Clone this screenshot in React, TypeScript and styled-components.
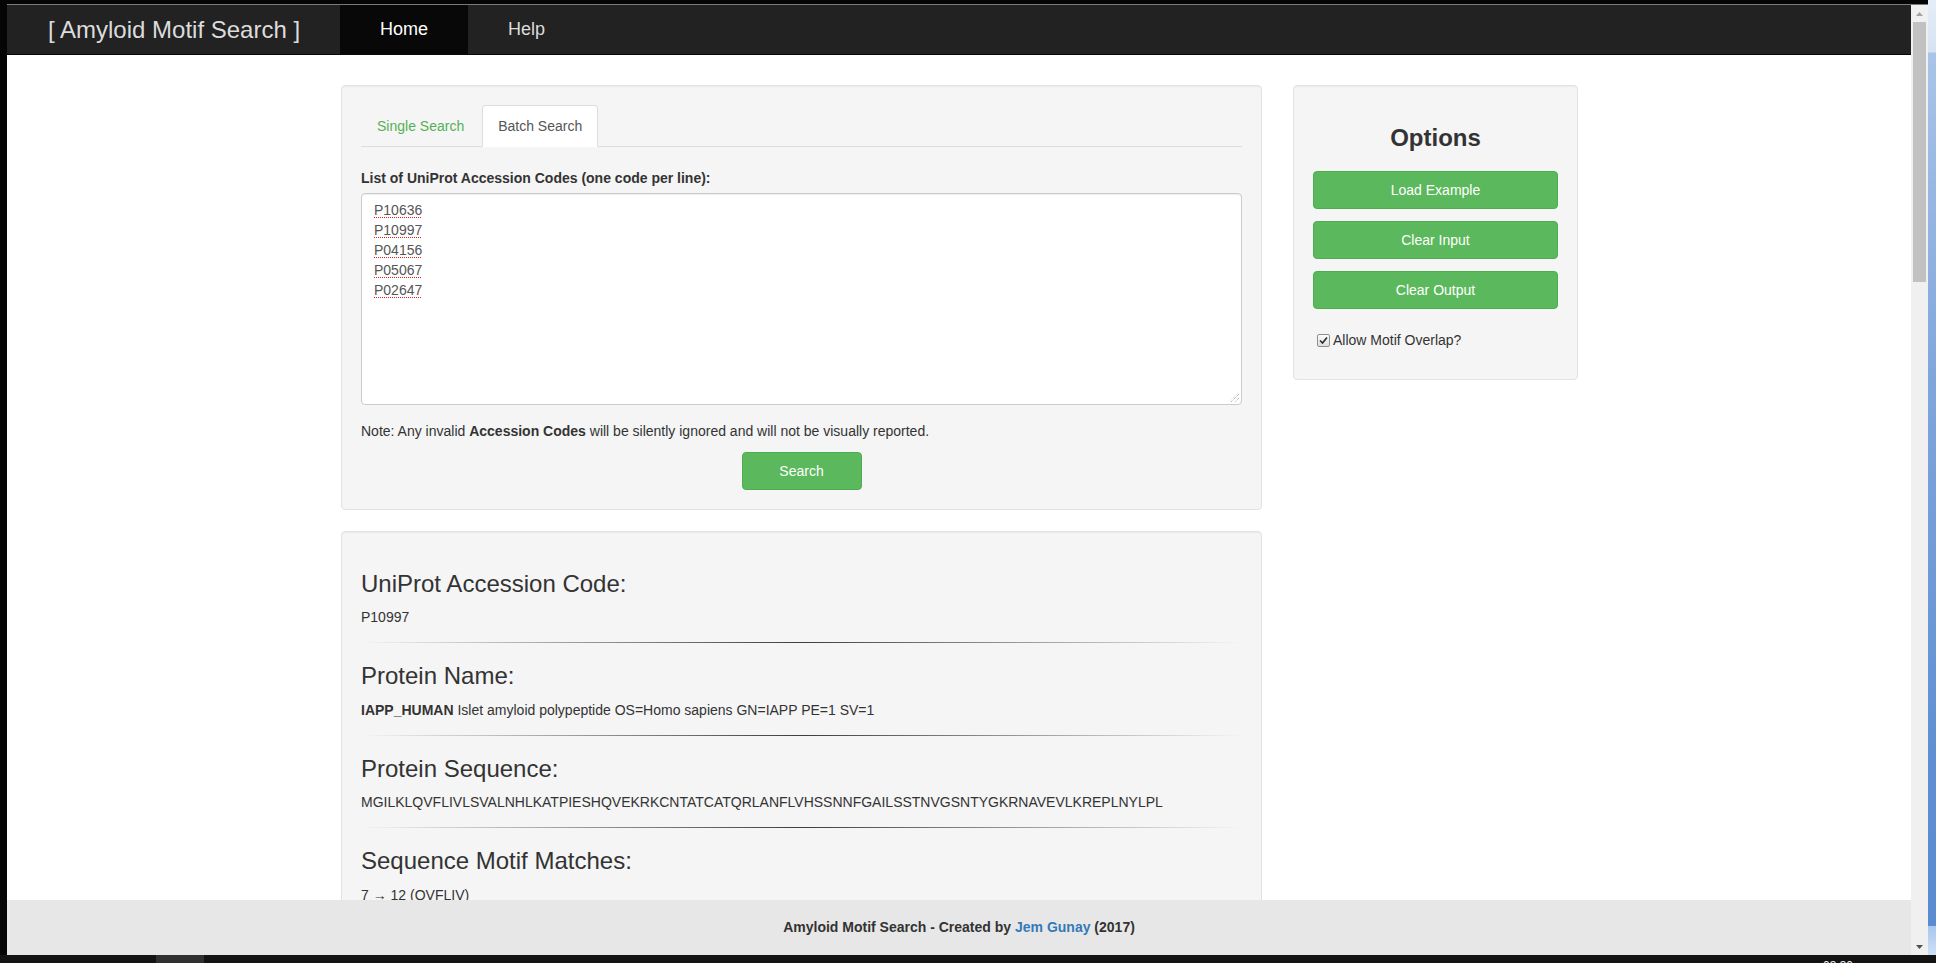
import React from "react";
import styled, { createGlobalStyle } from "styled-components";

const GlobalStyle = createGlobalStyle`
  html, body {
    margin: 0;
    padding: 0;
    width: 1936px;
    height: 963px;
    overflow: hidden;
    background: #000;
  }
  * { box-sizing: border-box; }
  body {
    font-family: "Liberation Sans", Arial, Helvetica, sans-serif;
    font-size: 14px;
    line-height: 20px;
    color: #333;
  }
`;

const Screen = styled.div`
  width: 1936px;
  height: 963px;
  display: flex;
  flex-direction: column;
  background: #000;
`;

const Body = styled.div`
  flex: 1;
  display: flex;
  min-height: 0;
`;

const LeftEdge = styled.div`
  width: 7px;
  background: #050505;
`;

const Window = styled.div`
  flex: 1;
  display: flex;
  flex-direction: column;
  min-width: 0;
`;

const TopEdge = styled.div`
  height: 4px;
  background: #050505;
`;

const WindowInner = styled.div`
  flex: 1;
  display: flex;
  min-height: 0;
`;

const Viewport = styled.div`
  position: relative;
  flex: 1;
  overflow: hidden;
  background: #fff;
  border-top: 1px solid #7a7a7a;
`;

const Scrollbar = styled.div`
  width: 17px;
  background: #f0f0f0;
  display: flex;
  flex-direction: column;
  border-top: 1px solid #7a7a7a;
`;

const ScrollArrow = styled.div`
  height: 17px;
  display: flex;
  align-items: center;
  justify-content: center;
`;

const ScrollTrack = styled.div`
  flex: 1;
  padding: 0 2px;
`;

const ScrollThumb = styled.div`
  height: 260px;
  background: #c1c1c1;
`;

const DesktopStrip = styled.div`
  width: 8px;
  background: linear-gradient(
    to bottom,
    #e4edf7 0,
    #d6e3f3 52px,
    #a9c4e8 53px,
    #7fa6dc 40%,
    #5f8fd2 80%,
    #5b8bd0 97%,
    #a9c6ec 97%,
    #cfe0f5 100%
  );
`;

const Taskbar = styled.div`
  height: 8px;
  background: #131313;
  display: flex;
  align-items: flex-start;
  overflow: hidden;
`;

const TaskbarItem = styled.div`
  margin-left: 156px;
  width: 48px;
  height: 8px;
  background: #303030;
`;

const Clock = styled.div`
  margin-left: auto;
  margin-right: 83px;
  color: #f0f0f0;
  font-size: 12px;
  line-height: 12px;
  padding-top: 5px;
`;

/* ---------- Navbar ---------- */

const Navbar = styled.nav`
  height: 50px;
  background: #222;
  border-bottom: 1px solid #080808;
  display: flex;
  align-items: stretch;
`;

const Brand = styled.div`
  padding: 0 40px 0 41px;
  font-size: 24px;
  line-height: 49px;
  color: #dcdcdc;
`;

const NavLink = styled.a<{ $active?: boolean }>`
  padding: 0 40px;
  font-size: 18px;
  line-height: 49px;
  text-decoration: none;
  color: ${(p) => (p.$active ? "#fff" : "#dcdcdc")};
  background: ${(p) => (p.$active ? "#080808" : "transparent")};
`;

/* ---------- Layout ---------- */

const ContentRow = styled.div`
  display: flex;
  align-items: flex-start;
  gap: 31px;
  margin-top: 30px;
  padding-left: 334px;
`;

const MainColumn = styled.div`
  width: 921px;
  display: flex;
  flex-direction: column;
  gap: 21px;
`;

const SideColumn = styled.div`
  width: 285px;
`;

const Well = styled.div`
  background: #f5f5f5;
  border: 1px solid #e3e3e3;
  border-radius: 4px;
  padding: 19px;
  box-shadow: inset 0 1px 1px rgba(0, 0, 0, 0.05);
`;

/* ---------- Tabs ---------- */

const Tabs = styled.ul`
  list-style: none;
  margin: 0;
  padding: 0;
  display: flex;
  border-bottom: 1px solid #ddd;
`;

const Tab = styled.li<{ $active?: boolean }>`
  margin: 0 2px -1px 0;
  padding: 10px 15px;
  line-height: 20px;
  font-size: 14px;
  border: 1px solid ${(p) => (p.$active ? "#ddd" : "transparent")};
  border-bottom-color: transparent;
  border-radius: 4px 4px 0 0;
  background: ${(p) => (p.$active ? "#fff" : "transparent")};
  color: ${(p) => (p.$active ? "#555" : "#55b055")};
`;

const FieldLabel = styled.label`
  display: block;
  margin: 21px 0 5px;
  font-weight: bold;
  line-height: 20px;
`;

const TextBox = styled.div`
  position: relative;
  height: 212px;
  background: #fff;
  border: 1px solid #ccc;
  border-radius: 4px;
  padding: 6px 12px;
  color: #555;
  font-size: 14px;
  line-height: 20px;
  box-shadow: inset 0 1px 1px rgba(0, 0, 0, 0.075);
`;

const CodeLine = styled.div`
  line-height: 20px;
`;

const Misspelled = styled.span`
  text-decoration: underline dotted #e02020;
  text-decoration-thickness: 1px;
  text-underline-offset: 2px;
`;

const Grip = styled.svg`
  position: absolute;
  right: 1px;
  bottom: 1px;
`;

const Note = styled.p`
  margin: 16px 0 11px;
  line-height: 20px;
`;

const Center = styled.div`
  display: flex;
  justify-content: center;
`;

const GreenButton = styled.button<{ $block?: boolean }>`
  height: 38px;
  width: ${(p) => (p.$block ? "100%" : "120px")};
  background: #5cb85c;
  border: 1px solid #4cae4c;
  border-radius: 4px;
  color: #fff;
  font-family: "Liberation Sans", Arial, sans-serif;
  font-size: 14px;
  line-height: 20px;
  padding: 0;
`;

/* ---------- Options ---------- */

const OptionsTitle = styled.h3`
  margin: 20px 0 20px;
  font-size: 24px;
  line-height: 1.1;
  font-weight: bold;
  text-align: center;
  color: #333;
`;

const ButtonStack = styled.div`
  display: flex;
  flex-direction: column;
  gap: 12px;
`;

const CheckRow = styled.div`
  display: flex;
  align-items: center;
  margin: 21px 0 10px;
  padding-left: 4px;
  line-height: 20px;
`;

const CheckBox = styled.span`
  width: 13px;
  height: 13px;
  margin-right: 3px;
  border: 1px solid #8f8f8f;
  border-radius: 2px;
  background: linear-gradient(#fbfbfb, #dedede);
  display: flex;
  align-items: center;
  justify-content: center;
`;

/* ---------- Results ---------- */

const ResultTitle = styled.h3`
  margin: 20px 0 10px;
  font-size: 24px;
  line-height: 1.1;
  font-weight: 500;
  color: #333;
`;

const ResultText = styled.p`
  margin: 0 0 10px;
  line-height: 20px;
`;

const FadeRule = styled.hr`
  border: 0;
  height: 1px;
  margin: 15px 0 20px;
  background-image: linear-gradient(
    to right,
    rgba(0, 0, 0, 0),
    rgba(0, 0, 0, 0.75),
    rgba(0, 0, 0, 0)
  );
`;

/* ---------- Footer ---------- */

const Footer = styled.footer`
  position: absolute;
  left: 0;
  right: 0;
  bottom: 0;
  height: 55px;
  background: #e7e7e7;
  display: flex;
  align-items: center;
  justify-content: center;
  font-weight: bold;
  padding-bottom: 2px;
`;

const FooterLink = styled.a`
  color: #337ab7;
  text-decoration: none;
`;

const codes = ["P10636", "P10997", "P04156", "P05067", "P02647"];

export default function App() {
  return (
    <>
      <GlobalStyle />
      <Screen>
        <Body>
          <LeftEdge />
          <Window>
            <TopEdge />
            <WindowInner>
              <Viewport>
                <Navbar>
                  <Brand>[ Amyloid Motif Search ]</Brand>
                  <NavLink $active>Home</NavLink>
                  <NavLink>Help</NavLink>
                </Navbar>

                <ContentRow>
                  <MainColumn>
                    <Well>
                      <Tabs>
                        <Tab>Single Search</Tab>
                        <Tab $active>Batch Search</Tab>
                      </Tabs>
                      <FieldLabel>List of UniProt Accession Codes (one code per line):</FieldLabel>
                      <TextBox>
                        {codes.map((c) => (
                          <CodeLine key={c}>
                            <Misspelled>{c}</Misspelled>
                          </CodeLine>
                        ))}
                        <Grip width="11" height="11" viewBox="0 0 11 11">
                          <line x1="10" y1="2" x2="2" y2="10" stroke="#9a9a9a" strokeWidth="1" strokeDasharray="1 1" />
                          <line x1="10" y1="6" x2="6" y2="10" stroke="#9a9a9a" strokeWidth="1" strokeDasharray="1 1" />
                          <line x1="9" y1="1" x2="1" y2="9" stroke="#dcdcdc" strokeWidth="1" strokeDasharray="1 1" />
                        </Grip>
                      </TextBox>
                      <Note>
                        Note: Any invalid <b>Accession Codes</b> will be silently ignored and will not be visually reported.
                      </Note>
                      <Center>
                        <GreenButton>Search</GreenButton>
                      </Center>
                    </Well>

                    <Well>
                      <ResultTitle>UniProt Accession Code:</ResultTitle>
                      <ResultText>P10997</ResultText>
                      <FadeRule />
                      <ResultTitle>Protein Name:</ResultTitle>
                      <ResultText>
                        <b>IAPP_HUMAN</b> Islet amyloid polypeptide OS=Homo sapiens GN=IAPP PE=1 SV=1
                      </ResultText>
                      <FadeRule />
                      <ResultTitle>Protein Sequence:</ResultTitle>
                      <ResultText>
                        MGILKLQVFLIVLSVALNHLKATPIESHQVEKRKCNTATCATQRLANFLVHSSNNFGAILSSTNVGSNTYGKRNAVEVLKREPLNYLPL
                      </ResultText>
                      <FadeRule />
                      <ResultTitle>Sequence Motif Matches:</ResultTitle>
                      <ResultText>7 → 12 (QVFLIV)</ResultText>
                      <ResultText>30 → 35 (LANFLV)</ResultText>
                    </Well>
                  </MainColumn>

                  <SideColumn>
                    <Well>
                      <OptionsTitle>Options</OptionsTitle>
                      <ButtonStack>
                        <GreenButton $block>Load Example</GreenButton>
                        <GreenButton $block>Clear Input</GreenButton>
                        <GreenButton $block>Clear Output</GreenButton>
                      </ButtonStack>
                      <CheckRow>
                        <CheckBox>
                          <svg width="9" height="9" viewBox="0 0 9 9">
                            <path d="M1 4.5 L3.5 7 L8 1.5" fill="none" stroke="#2b2b2b" strokeWidth="1.6" />
                          </svg>
                        </CheckBox>
                        Allow Motif Overlap?
                      </CheckRow>
                    </Well>
                  </SideColumn>
                </ContentRow>

                <Footer>
                  Amyloid Motif Search - Created by&nbsp;<FooterLink>Jem Gunay</FooterLink>&nbsp;(2017)
                </Footer>
              </Viewport>

              <Scrollbar>
                <ScrollArrow>
                  <svg width="7" height="4" viewBox="0 0 7 4">
                    <path d="M0 4 L3.5 0 L7 4 Z" fill="#a3a3a3" />
                  </svg>
                </ScrollArrow>
                <ScrollTrack>
                  <ScrollThumb />
                </ScrollTrack>
                <ScrollArrow>
                  <svg width="7" height="4" viewBox="0 0 7 4">
                    <path d="M0 0 L7 0 L3.5 4 Z" fill="#505050" />
                  </svg>
                </ScrollArrow>
              </Scrollbar>
            </WindowInner>
          </Window>
          <DesktopStrip />
        </Body>
        <Taskbar>
          <TaskbarItem />
          <Clock>03:30</Clock>
        </Taskbar>
      </Screen>
    </>
  );
}
